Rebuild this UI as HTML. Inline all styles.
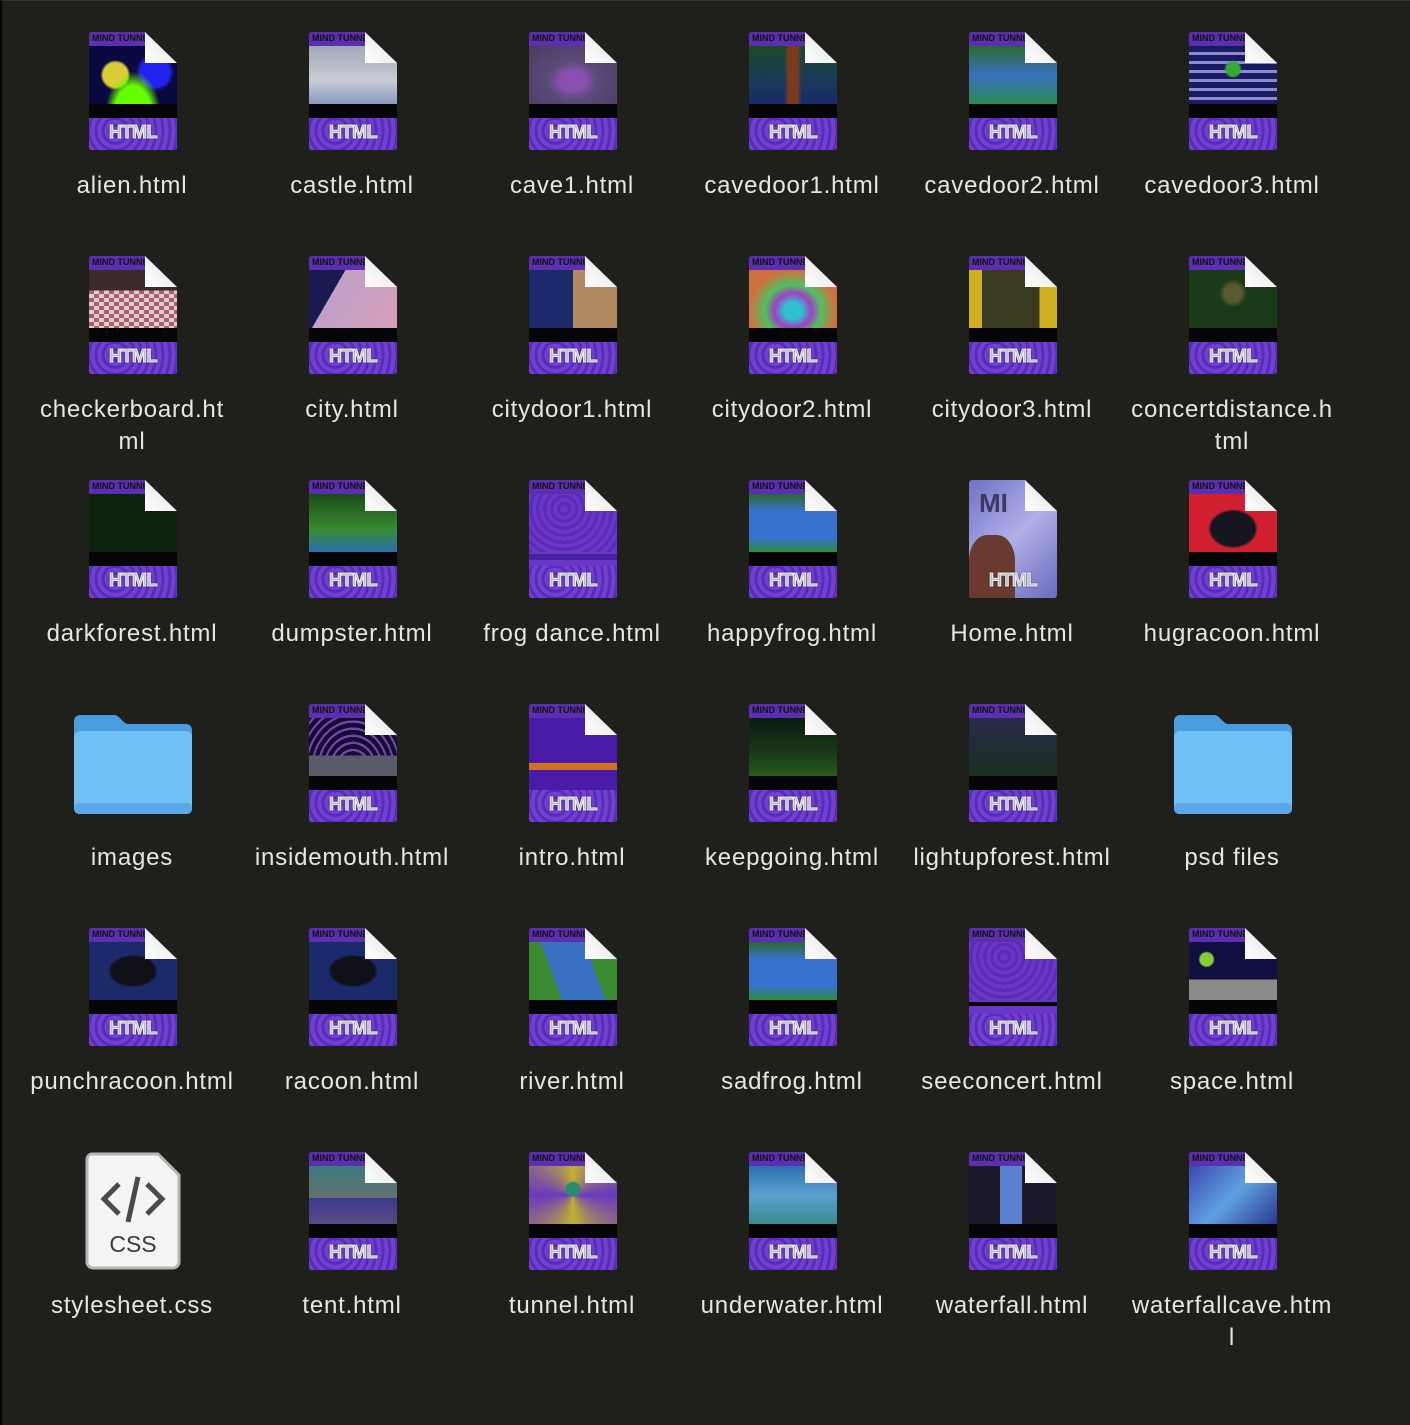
<!DOCTYPE html>
<html><head><meta charset="utf-8"><style>
body{margin:0;width:1410px;height:1424px;background:#1f1f1c;overflow:hidden;font-family:"Liberation Sans",Arial,sans-serif}
.frame{position:absolute;left:0;top:0;width:1408px;height:1424px;border-left:2px solid #050505;border-top:1px solid #333}
.grid{position:absolute;left:22px;top:32px;display:grid;grid-template-columns:repeat(6,220px);grid-auto-rows:224px}
.cell{position:relative}
.lbl{position:absolute;left:-10px;width:240px;top:138px;text-align:center;color:#e6e6e4;font-size:24px;letter-spacing:0.8px;line-height:32px}
.doc{position:absolute;left:67px;top:0;width:88px;height:118px;border-radius:3px;overflow:hidden;clip-path:polygon(0 0,56px 0,88px 31px,88px 100%,0 100%);background:#6a36c8}
.hd{position:absolute;left:0;top:0;width:88px;height:14px;background:#5b2fb0;color:#111;font-size:9px;font-weight:bold;line-height:12px;padding-left:3px;white-space:nowrap}
.im{position:absolute;left:0;top:14px;width:88px;height:58px}
.bk{position:absolute;left:0;top:72px;width:88px;height:14px;background:#050508}
.bt{position:absolute;left:0;top:86px;width:88px;height:32px;background:repeating-radial-gradient(circle at 30% 40%,#7040d0 0 4px,#5a2ab8 4px 7px)}
.ht{position:absolute;left:0;top:90px;width:88px;text-align:center;font-size:18px;font-weight:bold;color:#b8b8c8;-webkit-text-stroke:1px #eee;text-shadow:0 0 2px #000;letter-spacing:-0.5px}
.ear{position:absolute;left:123px;top:0;width:32px;height:31px;background:linear-gradient(225deg,#bbb 0,#eee 45%,#fff 100%);clip-path:polygon(0 0,0 100%,100% 100%)}
.folder{position:absolute;left:52px;top:11px;width:118px;height:99px}
</style></head><body><div class="frame"></div>
<div class="grid">
<!-- row1 -->
<div class="cell"><div class="doc"><div class="hd">MIND TUNNE</div><div class="im" style="background:radial-gradient(ellipse at 50% 120%,#6f0 0 30%,transparent 45%),radial-gradient(circle at 30% 50%,#dc3 0 18%,transparent 22%),radial-gradient(circle at 75% 45%,#22e 0 20%,transparent 26%),#0a0a40"></div><div class="bk"></div><div class="bt"></div><div class="ht">HTML</div></div><div class="ear"></div><div class="lbl">alien.html</div></div>
<div class="cell"><div class="doc"><div class="hd">MIND TUNNE</div><div class="im" style="background:linear-gradient(#a0a8b8,#c8ccd4 60%,#8a98c0)"></div><div class="bk"></div><div class="bt"></div><div class="ht">HTML</div></div><div class="ear"></div><div class="lbl">castle.html</div></div>
<div class="cell"><div class="doc"><div class="hd">MIND TUNNE</div><div class="im" style="background:radial-gradient(ellipse at 50% 60%,#8a50b0 0 20%,#5a4a78 40%,#4a3a60)"></div><div class="bk"></div><div class="bt"></div><div class="ht">HTML</div></div><div class="ear"></div><div class="lbl">cave1.html</div></div>
<div class="cell"><div class="doc"><div class="hd">MIND TUNNE</div><div class="im" style="background:linear-gradient(90deg,transparent 40%,#7a3a20 45%,#7a3a20 55%,transparent 60%),linear-gradient(#1a4a2a,#1a3a5a 60%,#1a2a6a)"></div><div class="bk"></div><div class="bt"></div><div class="ht">HTML</div></div><div class="ear"></div><div class="lbl">cavedoor1.html</div></div>
<div class="cell"><div class="doc"><div class="hd">MIND TUNNE</div><div class="im" style="background:linear-gradient(#2a6a30,#3a70c0 50%,#2a8a50)"></div><div class="bk"></div><div class="bt"></div><div class="ht">HTML</div></div><div class="ear"></div><div class="lbl">cavedoor2.html</div></div>
<div class="cell"><div class="doc"><div class="hd">MIND TUNNE</div><div class="im" style="background:radial-gradient(circle at 50% 40%,#3a3 0 12%,transparent 16%),repeating-linear-gradient(#1a1a60 0 6px,#8a8ad0 6px 9px)"></div><div class="bk"></div><div class="bt"></div><div class="ht">HTML</div></div><div class="ear"></div><div class="lbl">cavedoor3.html</div></div>
<!-- row2 -->
<div class="cell"><div class="doc"><div class="hd">MIND TUNNE</div><div class="im" style="background:linear-gradient(#3a2a2a,#3a2a2a 35%,transparent 35%),repeating-conic-gradient(#b05a6a 0 25%,#d8d0d0 0 50%) 0 0/10px 8px"></div><div class="bk"></div><div class="bt"></div><div class="ht">HTML</div></div><div class="ear"></div><div class="lbl">checkerboard.ht<br>ml</div></div>
<div class="cell"><div class="doc"><div class="hd">MIND TUNNE</div><div class="im" style="background:linear-gradient(120deg,#1a1a50 0 30%,#c0a0c8 30%,#d8a0b8)"></div><div class="bk"></div><div class="bt"></div><div class="ht">HTML</div></div><div class="ear"></div><div class="lbl">city.html</div></div>
<div class="cell"><div class="doc"><div class="hd">MIND TUNNE</div><div class="im" style="background:linear-gradient(90deg,#1a2a6a 0 50%,#b08a60 50%)"></div><div class="bk"></div><div class="bt"></div><div class="ht">HTML</div></div><div class="ear"></div><div class="lbl">citydoor1.html</div></div>
<div class="cell"><div class="doc"><div class="hd">MIND TUNNE</div><div class="im" style="background:radial-gradient(ellipse at 50% 70%,#30c0d0 0 15%,#a040c0 30%,#50c060 45%,#d07040 70%)"></div><div class="bk"></div><div class="bt"></div><div class="ht">HTML</div></div><div class="ear"></div><div class="lbl">citydoor2.html</div></div>
<div class="cell"><div class="doc"><div class="hd">MIND TUNNE</div><div class="im" style="background:linear-gradient(90deg,#d0b020 0 15%,#3a3a20 15% 80%,#d0b020 80%)"></div><div class="bk"></div><div class="bt"></div><div class="ht">HTML</div></div><div class="ear"></div><div class="lbl">citydoor3.html</div></div>
<div class="cell"><div class="doc"><div class="hd">MIND TUNNE</div><div class="im" style="background:radial-gradient(circle at 50% 40%,#5a5a30 0 15%,transparent 25%),#1a3a1a"></div><div class="bk"></div><div class="bt"></div><div class="ht">HTML</div></div><div class="ear"></div><div class="lbl">concertdistance.h<br>tml</div></div>
<!-- row3 -->
<div class="cell"><div class="doc"><div class="hd">MIND TUNNE</div><div class="im" style="background:#0e200e"></div><div class="bk"></div><div class="bt"></div><div class="ht">HTML</div></div><div class="ear"></div><div class="lbl">darkforest.html</div></div>
<div class="cell"><div class="doc"><div class="hd">MIND TUNNE</div><div class="im" style="background:linear-gradient(#1a4a1a,#3a8a30 60%,#2a70b0)"></div><div class="bk"></div><div class="bt"></div><div class="ht">HTML</div></div><div class="ear"></div><div class="lbl">dumpster.html</div></div>
<div class="cell"><div class="doc"><div class="im" style="top:0;height:72px;background:repeating-radial-gradient(circle at 40% 40%,#6a36c8 0 4px,#5a2ab8 4px 7px)"></div><div class="hd">MIND TUNNE</div><div class="bk" style="background:#4a22a0;height:6px;top:74px"></div><div class="bt"></div><div class="ht">HTML</div></div><div class="ear"></div><div class="lbl">frog dance.html</div></div>
<div class="cell"><div class="doc"><div class="hd">MIND TUNNE</div><div class="im" style="background:linear-gradient(#2a6a30,#3a70d0 30%,#3a70d0 75%,#2a8a40)"></div><div class="bk"></div><div class="bt"></div><div class="ht">HTML</div></div><div class="ear"></div><div class="lbl">happyfrog.html</div></div>
<div class="cell"><div class="doc" style="background:linear-gradient(135deg,#7070c8,#b0b0e8 50%,#6a6ac0)"><div style="position:absolute;left:10px;top:8px;font-size:26px;font-weight:bold;color:#3a3a60">MI</div><div style="position:absolute;left:0;top:55px;width:46px;height:63px;background:#6a3a30;border-radius:40% 40% 0 0"></div><div class="ht">HTML</div></div><div class="ear"></div><div class="lbl">Home.html</div></div>
<div class="cell"><div class="doc"><div class="hd">MIND TUNNE</div><div class="im" style="background:radial-gradient(ellipse at 50% 60%,#151520 0 35%,transparent 40%),#d02030"></div><div class="bk"></div><div class="bt"></div><div class="ht">HTML</div></div><div class="ear"></div><div class="lbl">hugracoon.html</div></div>
<!-- row4 -->
<div class="cell"><svg class="folder" viewBox="0 0 118 99"><path d="M0 6a6 6 0 0 1 6-6h34c6 0 8 8 14 9h58a6 6 0 0 1 6 6v10H0z" fill="#4a9ee0"/><rect x="0" y="16" width="118" height="83" rx="6" fill="#70bff5"/><rect x="0" y="88" width="118" height="11" rx="5" fill="#5aa8e8"/></svg><div class="lbl">images</div></div>
<div class="cell"><div class="doc"><div class="hd">MIND TUNNE</div><div class="im" style="background:linear-gradient(transparent 65%,#5a5a6a 65%),repeating-radial-gradient(ellipse at 50% 90%,#1a0a30 0 4px,#6a4ab0 4px 6px)"></div><div class="bk"></div><div class="bt"></div><div class="ht">HTML</div></div><div class="ear"></div><div class="lbl">insidemouth.html</div></div>
<div class="cell"><div class="doc"><div class="hd">MIND TUNNE</div><div class="im" style="background:linear-gradient(transparent 78%,#d07020 78% 90%,transparent 90%),#4a1aa8"></div><div class="bk" style="background:#4a1aa8"></div><div class="bt"></div><div class="ht">HTML</div></div><div class="ear"></div><div class="lbl">intro.html</div></div>
<div class="cell"><div class="doc"><div class="hd">MIND TUNNE</div><div class="im" style="background:linear-gradient(#0a1a10,#1a3a1a 60%,#2a5a20)"></div><div class="bk"></div><div class="bt"></div><div class="ht">HTML</div></div><div class="ear"></div><div class="lbl">keepgoing.html</div></div>
<div class="cell"><div class="doc"><div class="hd">MIND TUNNE</div><div class="im" style="background:linear-gradient(#2a2a4a,#1a3020)"></div><div class="bk"></div><div class="bt"></div><div class="ht">HTML</div></div><div class="ear"></div><div class="lbl">lightupforest.html</div></div>
<div class="cell"><svg class="folder" viewBox="0 0 118 99"><path d="M0 6a6 6 0 0 1 6-6h34c6 0 8 8 14 9h58a6 6 0 0 1 6 6v10H0z" fill="#4a9ee0"/><rect x="0" y="16" width="118" height="83" rx="6" fill="#70bff5"/><rect x="0" y="88" width="118" height="11" rx="5" fill="#5aa8e8"/></svg><div class="lbl">psd files</div></div>
<!-- row5 -->
<div class="cell"><div class="doc"><div class="hd">MIND TUNNE</div><div class="im" style="background:radial-gradient(ellipse at 50% 50%,#101018 0 35%,transparent 40%),#1a2a6a"></div><div class="bk"></div><div class="bt"></div><div class="ht">HTML</div></div><div class="ear"></div><div class="lbl">punchracoon.html</div></div>
<div class="cell"><div class="doc"><div class="hd">MIND TUNNE</div><div class="im" style="background:radial-gradient(ellipse at 50% 50%,#101018 0 35%,transparent 40%),#1a2a6a"></div><div class="bk"></div><div class="bt"></div><div class="ht">HTML</div></div><div class="ear"></div><div class="lbl">racoon.html</div></div>
<div class="cell"><div class="doc"><div class="hd">MIND TUNNE</div><div class="im" style="background:linear-gradient(70deg,#3a8a30 0 30%,#3a70c0 30% 70%,#3a8a30 70%)"></div><div class="bk"></div><div class="bt"></div><div class="ht">HTML</div></div><div class="ear"></div><div class="lbl">river.html</div></div>
<div class="cell"><div class="doc"><div class="hd">MIND TUNNE</div><div class="im" style="background:linear-gradient(#2a6a30,#3a70d0 30%,#3a70d0 75%,#2a8a40)"></div><div class="bk"></div><div class="bt"></div><div class="ht">HTML</div></div><div class="ear"></div><div class="lbl">sadfrog.html</div></div>
<div class="cell"><div class="doc"><div class="im" style="top:0;height:72px;background:repeating-radial-gradient(circle at 40% 40%,#6a36c8 0 4px,#5a2ab8 4px 7px)"></div><div class="hd">MIND TUNNE</div><div class="bk" style="height:4px;top:74px"></div><div class="bt"></div><div class="ht">HTML</div></div><div class="ear"></div><div class="lbl">seeconcert.html</div></div>
<div class="cell"><div class="doc"><div class="hd">MIND TUNNE</div><div class="im" style="background:linear-gradient(transparent 65%,#8a8a8a 65%),radial-gradient(circle at 20% 30%,#8c3 0 8%,transparent 10%),#101040"></div><div class="bk"></div><div class="bt"></div><div class="ht">HTML</div></div><div class="ear"></div><div class="lbl">space.html</div></div>
<!-- row6 -->
<div class="cell"><svg style="position:absolute;left:63px;top:0" width="96" height="118" viewBox="0 0 96 118"><path d="M6 2h67l21 21v87a6 6 0 0 1-6 6H8a6 6 0 0 1-6-6V8a6 6 0 0 1 4-6z" fill="#f4f4f4" stroke="#b5b5b5" stroke-width="3"/><path d="M34 32L19 47l15 15M62 32l15 15-15 15M53 25l-10 45" fill="none" stroke="#4a4a4a" stroke-width="5"/><text x="48" y="100" font-size="23" text-anchor="middle" fill="#3a3a3a" font-family="Liberation Sans,sans-serif">CSS</text></svg><div class="lbl">stylesheet.css</div></div>
<div class="cell"><div class="doc"><div class="hd">MIND TUNNE</div><div class="im" style="background:linear-gradient(transparent 55%,#3a3a90 55%,#5a4a80),linear-gradient(#3a7a80,#8a6a60)"></div><div class="bk"></div><div class="bt"></div><div class="ht">HTML</div></div><div class="ear"></div><div class="lbl">tent.html</div></div>
<div class="cell"><div class="doc"><div class="hd">MIND TUNNE</div><div class="im" style="background:radial-gradient(circle at 50% 40%,#2a8a70 0 12%,transparent 15%),conic-gradient(#c0b030,#6a3ac0,#c0b030,#6a3ac0,#c0b030)"></div><div class="bk"></div><div class="bt"></div><div class="ht">HTML</div></div><div class="ear"></div><div class="lbl">tunnel.html</div></div>
<div class="cell"><div class="doc"><div class="hd">MIND TUNNE</div><div class="im" style="background:linear-gradient(#2a70b0,#5aa0d0 50%,#3a8a90)"></div><div class="bk"></div><div class="bt"></div><div class="ht">HTML</div></div><div class="ear"></div><div class="lbl">underwater.html</div></div>
<div class="cell"><div class="doc"><div class="hd">MIND TUNNE</div><div class="im" style="background:linear-gradient(90deg,#1a1a2a 0 35%,#5a80d0 35% 60%,#1a1a2a 60%)"></div><div class="bk"></div><div class="bt"></div><div class="ht">HTML</div></div><div class="ear"></div><div class="lbl">waterfall.html</div></div>
<div class="cell"><div class="doc"><div class="hd">MIND TUNNE</div><div class="im" style="background:linear-gradient(135deg,#3a4ab0,#60a0e0 50%,#2a3a90)"></div><div class="bk"></div><div class="bt"></div><div class="ht">HTML</div></div><div class="ear"></div><div class="lbl">waterfallcave.htm<br>l</div></div>
</div>
</body></html>
